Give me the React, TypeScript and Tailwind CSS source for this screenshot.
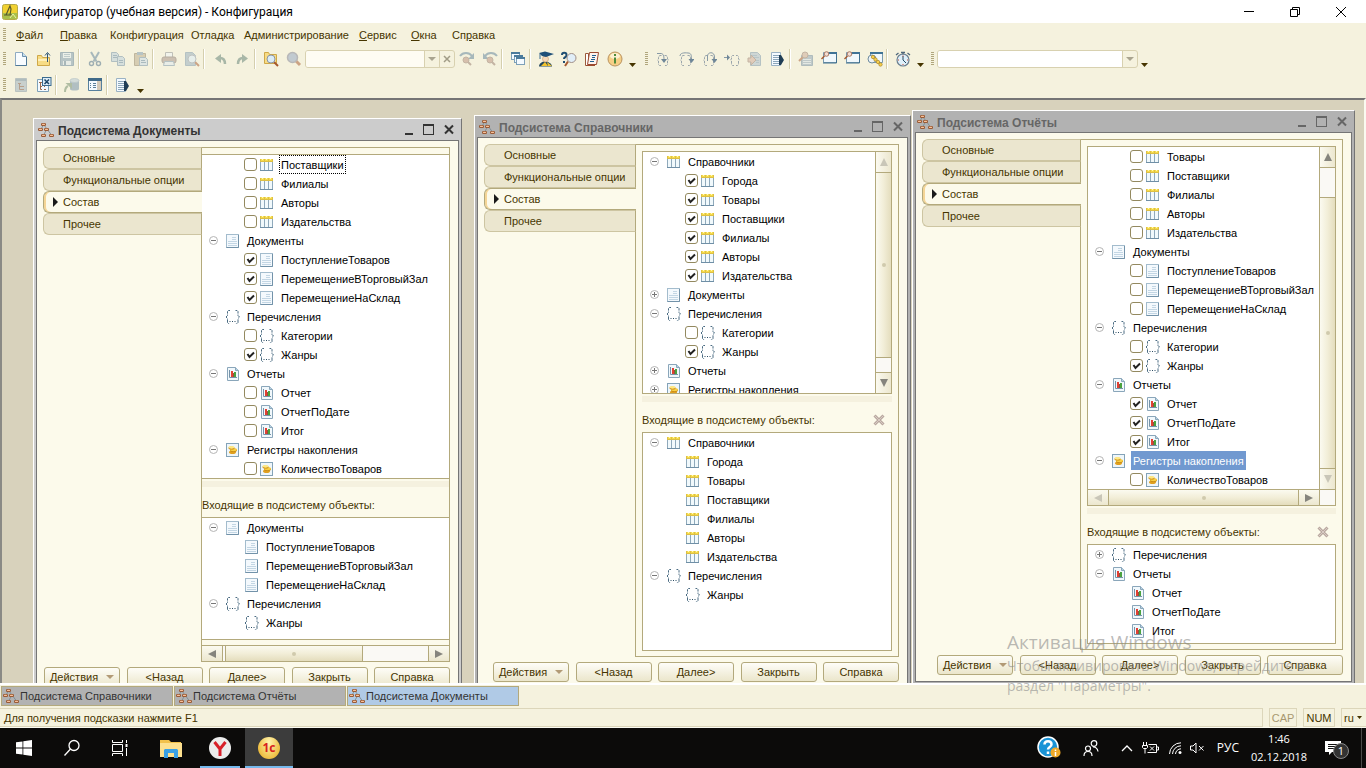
import React, { useState } from 'react';

type Kind = 'catalog' | 'document' | 'enum' | 'report' | 'register';

interface TreeItem {
  kind: Kind;
  label: string;
  state?: 'open' | 'closed'; // only groups have a toggle
  checked?: boolean;
  focused?: boolean;
  selected?: boolean;
}

const group = (kind: Kind, label: string, state: 'open' | 'closed' = 'open', selected = false): TreeItem => ({
  kind,
  label,
  state,
  selected,
});

const leaf = (kind: Kind, label: string, checked = false, focused = false): TreeItem => ({
  kind,
  label,
  checked,
  focused,
});

const documentsTree: TreeItem[] = [
  leaf('catalog', 'Поставщики', false, true),
  leaf('catalog', 'Филиалы'),
  leaf('catalog', 'Авторы'),
  leaf('catalog', 'Издательства'),
  group('document', 'Документы'),
  leaf('document', 'ПоступлениеТоваров', true),
  leaf('document', 'ПеремещениеВТорговыйЗал', true),
  leaf('document', 'ПеремещениеНаСклад', true),
  group('enum', 'Перечисления'),
  leaf('enum', 'Категории'),
  leaf('enum', 'Жанры', true),
  group('report', 'Отчеты'),
  leaf('report', 'Отчет'),
  leaf('report', 'ОтчетПоДате'),
  leaf('report', 'Итог'),
  group('register', 'Регистры накопления'),
  leaf('register', 'КоличествоТоваров'),
];

const documentsIncluded: TreeItem[] = [
  group('document', 'Документы'),
  leaf('document', 'ПоступлениеТоваров'),
  leaf('document', 'ПеремещениеВТорговыйЗал'),
  leaf('document', 'ПеремещениеНаСклад'),
  group('enum', 'Перечисления'),
  leaf('enum', 'Жанры'),
];

const catalogsTree: TreeItem[] = [
  group('catalog', 'Справочники'),
  leaf('catalog', 'Города', true),
  leaf('catalog', 'Товары', true),
  leaf('catalog', 'Поставщики', true),
  leaf('catalog', 'Филиалы', true),
  leaf('catalog', 'Авторы', true),
  leaf('catalog', 'Издательства', true),
  group('document', 'Документы', 'closed'),
  group('enum', 'Перечисления'),
  leaf('enum', 'Категории'),
  leaf('enum', 'Жанры', true),
  group('report', 'Отчеты', 'closed'),
  group('register', 'Регистры накопления', 'closed'),
];

const catalogsIncluded: TreeItem[] = [
  group('catalog', 'Справочники'),
  leaf('catalog', 'Города'),
  leaf('catalog', 'Товары'),
  leaf('catalog', 'Поставщики'),
  leaf('catalog', 'Филиалы'),
  leaf('catalog', 'Авторы'),
  leaf('catalog', 'Издательства'),
  group('enum', 'Перечисления'),
  leaf('enum', 'Жанры'),
];

const reportsTree: TreeItem[] = [
  leaf('catalog', 'Товары'),
  leaf('catalog', 'Поставщики'),
  leaf('catalog', 'Филиалы'),
  leaf('catalog', 'Авторы'),
  leaf('catalog', 'Издательства'),
  group('document', 'Документы'),
  leaf('document', 'ПоступлениеТоваров'),
  leaf('document', 'ПеремещениеВТорговыйЗал'),
  leaf('document', 'ПеремещениеНаСклад'),
  group('enum', 'Перечисления'),
  leaf('enum', 'Категории'),
  leaf('enum', 'Жанры', true),
  group('report', 'Отчеты'),
  leaf('report', 'Отчет', true),
  leaf('report', 'ОтчетПоДате', true),
  leaf('report', 'Итог', true),
  group('register', 'Регистры накопления', 'open', true),
  leaf('register', 'КоличествоТоваров'),
];

const reportsIncluded: TreeItem[] = [
  group('enum', 'Перечисления', 'closed'),
  group('report', 'Отчеты'),
  leaf('report', 'Отчет'),
  leaf('report', 'ОтчетПоДате'),
  leaf('report', 'Итог'),
];

/* ---------- Icons ---------- */

function Svg({ children }: { children: React.ReactNode }) {
  return (
    <svg width="16" height="16" viewBox="0 0 16 16" fill="none" className="shrink-0" aria-hidden="true">
      {children}
    </svg>
  );
}

function KindIcon({ kind }: { kind: Kind }) {
  if (kind === 'catalog') {
    return (
      <Svg>
        <path d="M1 5h13v8H1z" fill="#f1f9fc" />
        <path d="M1.5 4v10M5.500 4v10M9.500 4v10M13.500 4v10" stroke="#8fa9bb" />
        <path d="M1 13.500h13" stroke="#6f8fa6" />
        <path d="M1 2h13v3H1z" fill="#dcbf45" />
        <path d="M2 2h3v2H2zM6 2h3v2H6zM10 2h3v2h-3z" fill="#f6dc4c" />
        <path d="M3 2h1v1H3zM7 2h1v1H7zM11 2h1v1h-1z" fill="#fff7b8" />
      </Svg>
    );
  }
  if (kind === 'document') {
    return (
      <Svg>
        <rect x="1.5" y="1.500" width="12" height="13" fill="#f4f9fd" stroke="#a3bccd" />
        <path d="M13.500 2v12.500H1.500" stroke="#7292a9" />
        <path d="M7 4.500h4M7 6.500h4M3 8.500h9M3 10.500h9M3 12.500h9" stroke="#c3d6e4" />
      </Svg>
    );
  }
  if (kind === 'enum') {
    return (
      <Svg>
        <path d="M5 1.500H3.500L2.500 2.500v4L1 8l1.500 1.500v4l1 1H5M10.500 1.500H12l1 1v4L14.500 8 13 9.500v4l-1 1h-1.500" stroke="#4a6b82" strokeDasharray="5 1" />
        <path d="M4.500 12.500h1M7 12.500h1M9.500 12.500h1" stroke="#2b4c63" />
      </Svg>
    );
  }
  if (kind === 'report') {
    return (
      <Svg>
        <path d="M2.500 1.500h8l3 3v10h-11z" fill="#f1f8fc" stroke="#8aa6ba" />
        <path d="M10.500 1.500v3h3" fill="#b9d2e2" stroke="#8aa6ba" />
        <path d="M4.500 4v7.500H12" stroke="#7693a8" />
        <path d="M6 5h2v6H6z" fill="#e23f33" />
        <path d="M8 7h1v4H8z" fill="#8d5540" />
        <path d="M9 6h2v5H9z" fill="#4aa23f" />
      </Svg>
    );
  }
  return (
    <Svg>
      <rect x="1.500" y="1.500" width="12" height="13" fill="#eef6fb" stroke="#84a3b8" />
      <ellipse cx="7.500" cy="10.200" rx="3.500" ry="1.800" fill="#e0a020" />
      <ellipse cx="8.500" cy="8.300" rx="3.500" ry="1.800" fill="#c98a14" />
      <ellipse cx="8.500" cy="7.600" rx="3.500" ry="1.600" fill="#f8cf45" />
      <ellipse cx="6.500" cy="6" rx="3" ry="1.500" fill="#c98a14" />
      <ellipse cx="6.500" cy="5.300" rx="3" ry="1.400" fill="#ffe883" />
    </Svg>
  );
}

const nodes = [
  [3, 1],
  [0, 6],
  [6, 6],
  [3, 12],
  [11, 12],
];

function SubsystemIcon() {
  return (
    <Svg>
      <path d="M5.500 3L3 7M6 3l7.500 10M8.500 8L5.500 13" stroke="#7b8a92" strokeWidth="0.900" />
      {nodes.map(([x, y]) => (
        <g key={`${x}-${y}`}>
          <rect x={x} y={y} width="5" height="3" rx="1.200" fill="#9a5b36" />
          <rect x={x + 1} y={y + 0.700} width="3" height="1.300" rx="0.600" fill="#f7c29c" />
        </g>
      ))}
    </Svg>
  );
}

function Toggle({ state }: { state: 'open' | 'closed' }) {
  return (
    <svg width="9" height="9" viewBox="0 0 9 9" fill="none" className="shrink-0" aria-hidden="true">
      <circle cx="4.500" cy="4.500" r="4" fill="#fff" stroke="#b4b4b4" />
      <path d={state === 'open' ? 'M2 4.500h5' : 'M2 4.500h5M4.500 2v5'} stroke="#777" />
    </svg>
  );
}

function Glass({ x = 0, y = 0 }: { x?: number; y?: number }) {
  return (
    <g>
      <path d={`M${x + 8} ${y + 8}l4 4`} stroke="#a5592f" strokeWidth="2" />
      <circle cx={x + 5} cy={y + 5} r="4" fill="#d9ecf8" stroke="#8b94a3" />
    </g>
  );
}

const loop = (arrow: string, head: string) => (
  <Svg>
    <path d="M6.500 4.500H5l-1.500 1v2.500L2.500 9l1 1v3.500l1 1h2M9.500 4.500H11l1.500 1v2.500l1 1-1 1v3.500l-1 1h-2" stroke="#9aa5ab" strokeDasharray="3 1" />
    <path d={arrow} stroke="#8799a5" />
    <path d={head} fill="#6f8798" />
  </Svg>
);

const icons: Record<string, React.ReactNode> = {
  newFile: (
    <Svg>
      <path d="M2.500 1.500h7l4 4v9h-11z" fill="#f8fcff" stroke="#8fabc2" />
      <path d="M13.500 6v8.500h-11" stroke="#4f7897" />
      <path d="M9.500 1.500v4h4" fill="#c9dfee" stroke="#6e93af" />
    </Svg>
  ),
  open: (
    <Svg>
      <path d="M1.500 14.500v-10h4l1 2h7v8z" fill="#f7dc85" stroke="#cfa848" />
      <path d="M2 8h11v2H2z" fill="#fff0bb" />
      <path d="M11.500 11V2.500M9 4.500l2.500-3 2.500 3" stroke="#2f5775" />
    </Svg>
  ),
  save: (
    <Svg>
      <path d="M1.500 1.500h13v13h-13z" fill="#7b97ad" stroke="#5e7d95" />
      <path d="M4 2h8v5H4z" fill="#e3edf3" />
      <path d="M5 3.500h6M5 5.500h6" stroke="#8aa5b8" />
      <path d="M4 10h8v4H4z" fill="#dbe6ed" />
      <path d="M5 10h2v4H5z" fill="#5e7d95" />
    </Svg>
  ),
  cut: (
    <Svg>
      <path d="M4 1l5.500 9.500M12 1L6.500 10.500" stroke="#5c7f9a" strokeWidth="2" />
      <circle cx="4.500" cy="12.500" r="2" stroke="#4a6d88" strokeWidth="1.400" />
      <circle cx="11.500" cy="12.500" r="2" stroke="#4a6d88" strokeWidth="1.400" />
    </Svg>
  ),
  copy: (
    <Svg>
      <path d="M1.500 1.500h5l2 2v7h-7z" fill="#b9cddb" stroke="#6f8da5" />
      <path d="M7.500 5.500h5l2 2v7h-7z" fill="#b9cddb" stroke="#6f8da5" />
      <path d="M3 4.500h4M3 6.500h4M9 9.500h4M9 11.500h4" stroke="#6283a0" />
    </Svg>
  ),
  paste: (
    <Svg>
      <path d="M1.500 2.500h11v12h-11z" fill="#b9a98a" stroke="#8b7c60" />
      <path d="M4 1h6v3H4z" fill="#7b97ad" />
      <path d="M6.500 6.500h6l2 2v6h-8z" fill="#c9dae6" stroke="#6f8da5" />
      <path d="M8 9.500h4M8 11.500h5" stroke="#6283a0" />
    </Svg>
  ),
  print: (
    <Svg>
      <path d="M4.500 1.500h7v5h-7z" fill="#eef4f8" stroke="#8a8f94" />
      <rect x="1" y="6" width="14" height="6" rx="2" fill="#a58f86" stroke="#7b6c66" />
      <path d="M3.500 10.500h9l1 4h-11z" fill="#dfe9f0" stroke="#7793aa" />
    </Svg>
  ),
  preview: (
    <Svg>
      <path d="M1.500 1.500h7l3 3v10h-10z" fill="#92abbd" stroke="#7793aa" />
      <Glass x={3} y={3} />
    </Svg>
  ),
  undo: (
    <Svg>
      <path d="M13 13c0-4-2-6-5-6" stroke="#5e7d72" strokeWidth="2.500" />
      <path d="M3 7.500l6-4.500v9z" fill="#5e7d72" />
    </Svg>
  ),
  redo: (
    <Svg>
      <path d="M3 13c0-4 2-6 5-6" stroke="#5e7d72" strokeWidth="2.500" />
      <path d="M13 7.500L7 3v9z" fill="#5e7d72" />
    </Svg>
  ),
  findInFiles: (
    <Svg>
      <path d="M1.500 12.500v-11h4l1 2h7v9z" fill="#f7dc85" stroke="#cfa848" />
      <Glass x={3} y={3} />
    </Svg>
  ),
  find: (
    <Svg>
      <path d="M10 10l4 4" stroke="#a5592f" strokeWidth="3" />
      <circle cx="6.500" cy="6.500" r="5" fill="#8fa3c4" stroke="#7c7f93" strokeWidth="1.500" />
    </Svg>
  ),
  findNext: (
    <Svg>
      <path d="M1 5c3-4 9-4 12 0" stroke="#5c7f9a" strokeWidth="2" />
      <path d="M15 2v6H9z" fill="#5c7f9a" />
      <circle cx="7" cy="9" r="3" fill="#b98e7b" stroke="#93786a" />
      <path d="M9 11l3 3" stroke="#93786a" strokeWidth="2" />
    </Svg>
  ),
  findPrev: (
    <Svg>
      <path d="M15 5c-3-4-9-4-12 0" stroke="#5c7f9a" strokeWidth="2" />
      <path d="M1 2v6h6z" fill="#5c7f9a" />
      <circle cx="8" cy="9" r="3" fill="#b98e7b" stroke="#93786a" />
      <path d="M10 11l3 3" stroke="#93786a" strokeWidth="2" />
    </Svg>
  ),
  windows: (
    <Svg>
      {[0, 3, 5].map((d) => (
        <g key={d}>
          <rect x={1.5 + d} y={1.5 + d} width="8" height="7" fill="#f4faff" stroke="#7da0b8" />
          <rect x={1 + d} y={1 + d} width="9" height="2" fill="#4b7b9c" />
        </g>
      ))}
    </Svg>
  ),
  assistant: (
    <Svg>
      <path d="M1 15.500c0-3 3-5 6-5s7 2 7 5z" fill="#24495f" />
      <path d="M3 15l4-4 3 4z" fill="#f3c32d" />
      <path d="M9 11l5 4h-4z" fill="#f3c32d" />
      <circle cx="7.500" cy="8" r="3" fill="#f6d9b8" stroke="#c79c70" strokeWidth="0.600" />
      <path d="M1 2l6-1.500 9 2.500-8 3-4-1z" fill="#1f5078" />
      <path d="M2 3v5" stroke="#3c6c90" />
    </Svg>
  ),
  syntaxHelp: (
    <Svg>
      <path d="M1 4c0-3 4.500-3 4.500 0S3 5.500 3 8M3 10v2" stroke="#1f4e73" strokeWidth="2" />
      <path d="M7 10.500L4 15" stroke="#a5592f" strokeWidth="2" />
      <circle cx="10.500" cy="7" r="4.500" fill="#e1eef8" stroke="#a08e86" />
    </Svg>
  ),
  book: (
    <Svg>
      <path d="M1.500 2.500h3v12h-3z" fill="#fff" stroke="#9c5a3c" />
      <path d="M5.500 1.500h9l-2 12h-9z" fill="#fdf3ee" stroke="#9c4a30" />
      <path d="M8 4.500h4M8 6.500h3M7 8.500h4M6 10.500h4" stroke="#1f5f8f" />
      <path d="M2 14.500h9" stroke="#9c4a30" />
    </Svg>
  ),
  info: (
    <Svg>
      <circle cx="8" cy="8" r="7" fill="#f6cf86" stroke="#b99361" />
      <ellipse cx="8" cy="5" rx="5" ry="3" fill="#fdf0d0" />
      <path d="M8 3v2M8 6.500v6" stroke="#4d8b3c" strokeWidth="2" />
    </Svg>
  ),
  stepInto: loop('M2 2.500h4c2 0 3 2 3 6', 'M6 8h6l-3 4z'),
  stepOver: loop('M2 5c0-3 4-3.500 8-3 3 0 3.500 2 3.500 6', 'M10.500 8h6l-3 4z'),
  stepOut: loop('M6.500 10V5c0-4 7-5 7 1v3', 'M10.500 8h6l-3 4z'),
  runTo: (
    <Svg>
      <path d="M10 4.500H8.500l-1 1V8l-1 1 1 1v3.500l1 1H10M12 4.500h1.500l1 1V8l1 1-1 1v3.500l-1 1H12" stroke="#9aa5ab" strokeDasharray="3 1" />
      <path d="M0 6.500h3" stroke="#8799a5" />
      <path d="M3 3.500v6l3-3z" fill="#6f8798" />
    </Svg>
  ),
  gotoLine: (
    <Svg>
      <path d="M3.500 1.500h7l3 3v10h-10z" fill="#a9bccb" stroke="#7793aa" />
      <path d="M5 4.500h5M5 6.500h7M9 9.500h3M9 11.500h3" stroke="#7e9cb3" />
      <path d="M1 7h3V4l5 5-5 5v-3H1z" fill="#cfa797" stroke="#93786a" />
    </Svg>
  ),
  runPage: (
    <Svg>
      <path d="M1.500 1.500h9v13h-9z" fill="#f4faff" stroke="#9ab2c4" />
      <path d="M3 4.500h6M3 6.500h6M3 8.500h6M3 10.500h6M3 12.500h6" stroke="#8ca7bb" />
      <path d="M9 4h2l3 5-3 5H9z" fill="#1f3d55" />
    </Svg>
  ),
  breakpoints: (
    <Svg>
      <path d="M3.500 4.500h11v10h-11z" fill="#8aa2b5" stroke="#6c879d" />
      <path d="M5 8.500h8M5 10.500h8M5 12.500h8" stroke="#d3dfe8" />
      <path d="M5 6l-4 4" stroke="#a5592f" strokeWidth="2" />
      <circle cx="7" cy="4" r="3" fill="#cba794" stroke="#93786a" />
    </Svg>
  ),
  watch: (
    <Svg>
      <path d="M2.500 1.500h13v10h-13z" fill="#f1f8fc" stroke="#7899af" />
      <path d="M15.500 2v10H2" stroke="#41708f" />
      <path d="M7 1h9v2H7z" fill="#3f7396" />
      <path d="M3.500 5L.5 8" stroke="#a5592f" strokeWidth="1.500" />
      <circle cx="5.500" cy="3" r="2.300" fill="#f3ddd2" stroke="#ab7b66" />
    </Svg>
  ),
  callStack: (
    <Svg>
      <path d="M3.500 1.500h12v10h-12z" fill="#f1f8fc" stroke="#7899af" />
      <path d="M3 1h13v2H3z" fill="#3f7396" />
      <circle cx="5" cy="8" r="4" fill="#eef3f5" stroke="#6f8c9f" />
      <g fill="#f7d04a" stroke="#a9852a" strokeWidth="0.700">
        <circle cx="6" cy="6" r="1.700" />
        <circle cx="8.500" cy="8.500" r="1.700" />
        <circle cx="11" cy="11" r="1.700" />
        <circle cx="13.500" cy="13.500" r="1.700" />
      </g>
    </Svg>
  ),
  timer: (
    <Svg>
      <circle cx="8" cy="9" r="6" fill="#dff0fa" stroke="#6b7f90" strokeWidth="1.200" />
      <path d="M8 5v4l3 3" stroke="#23475f" />
      <path d="M6 1.500h4M8 1.500v2M1 4l2.500-2M15 4l-2.500-2" stroke="#4c6579" strokeWidth="1.300" />
      <path d="M8 5.500v-1M12 9h1M3 9h1M8 13v1" stroke="#d0462e" />
    </Svg>
  ),
  configTree: (
    <Svg>
      <path d="M2.500 1.500h11v13h-11z" fill="#9db0be" stroke="#8195a5" />
      <path d="M3 2h10v2H3z" fill="#6c879d" />
      <path d="M5 6.500h3M6.500 7v5.500H11M6.500 9.500H11" stroke="#7a4f3a" />
    </Svg>
  ),
  closeConfig: (
    <Svg>
      <path d="M1.500 2.500h11v12h-11z" fill="#f4faff" stroke="#7da0b8" />
      <path d="M3 5.500h3M4.500 6v6.500H6M8 12.500h2M4.500 9.500H6M8 9.500h1" stroke="#9c6a4c" />
      <rect x="6.500" y="0.500" width="8.500" height="8" fill="#dcecf7" stroke="#3b6b8f" />
      <path d="M8.500 2.500l4.500 4.500M13 2.500L8.500 7" stroke="#1c4566" strokeWidth="1.500" />
    </Svg>
  ),
  updateDb: (
    <Svg>
      <path d="M6 3v9c0 2 9 2 9 0V3z" fill="#6f8ea8" />
      <ellipse cx="10.500" cy="3.500" rx="4.500" ry="2" fill="#b5c8d6" stroke="#7f9bb1" strokeWidth="0.700" />
      <path d="M1 15c0-3 1-5 3-6" stroke="#6d8a68" strokeWidth="2" />
      <path d="M1.500 6H8v6z" fill="#6d8a68" />
    </Svg>
  ),
  formPanel: (
    <Svg>
      <path d="M1.500 1.500h13v12h-13z" fill="#f4faff" stroke="#56809d" />
      <path d="M1 1h14v3H1z" fill="#3f6a89" />
      <path d="M10 4h4v9h-4z" fill="#d4c9b8" />
      <path d="M3 6.500h1M6 6.500h3M3 8.500h1M6 8.500h3M3 10.500h1M6 10.500h3" stroke="#5c7f99" />
    </Svg>
  ),
};

/* ---------- Toolbar parts ---------- */

function ToolButton({ icon, label, off = false }: { icon: string; label: string; off?: boolean }) {
  return (
    <button type="button" aria-label={label} disabled={off} className="flex h-5 w-[23px] shrink-0 items-center justify-center disabled:opacity-50">
      {icons[icon]}
    </button>
  );
}

function Separator() {
  return (
    <span className="flex w-[5px] shrink-0">
      <span className="h-5 w-px bg-[#d5cfae]" />
      <span className="h-5 w-px bg-white" />
    </span>
  );
}

function Grip() {
  return (
    <svg width="3" height="14" viewBox="0 0 3 14" className="mx-[3px] shrink-0" aria-hidden="true">
      <path d="M0 .5h3M0 2.500h3M0 4.500h3M0 6.500h3M0 8.500h3M0 10.500h3M0 12.500h3" stroke="#b0a67c" />
    </svg>
  );
}

function More() {
  return (
    <button type="button" aria-label="Еще" className="flex h-5 w-3 shrink-0 items-end justify-center pb-[2px]">
      <svg width="7" height="4" viewBox="0 0 7 4" aria-hidden="true">
        <path d="M0 0h7L3.500 4z" fill="#463500" />
      </svg>
    </button>
  );
}

function Combo({ label, className, clearable = false }: { label: string; className: string; clearable?: boolean }) {
  return (
    <div className={`flex h-[18px] shrink-0 overflow-hidden rounded-[3px] border border-[#d8d1b0] ${className}`}>
      <input type="text" aria-label={label} className={`min-w-0 flex-1 px-1 outline-none ${clearable ? 'bg-[#fefcf3]' : 'bg-white'}`} />
      <button type="button" aria-label="Список" className="flex w-[15px] items-center justify-center border-l border-[#d8d1b0]">
        <svg width="8" height="4" viewBox="0 0 8 4" aria-hidden="true">
          <path d="M0 0h8L4 4z" fill="#a9a48f" />
        </svg>
      </button>
      {clearable && (
        <button type="button" aria-label="Очистить" className="flex w-[15px] items-center justify-center border-l border-[#d8d1b0]">
          <svg width="8" height="8" viewBox="0 0 8 8" aria-hidden="true">
            <path d="M1 1l6 6M7 1L1 7" stroke="#a19c86" strokeWidth="1.500" />
          </svg>
        </button>
      )}
    </div>
  );
}

/* ---------- Tree ---------- */

function TreeRow({ item, checkable }: { item: TreeItem; checkable: boolean }) {
  const text = item.selected
    ? 'bg-[#7199d0] text-white'
    : item.focused
      ? 'outline-1 -outline-offset-1 outline-dotted outline-black'
      : '';
  const caption = (
    <span className={`h-[19px] px-[2px] pt-[2px] leading-[17px] whitespace-nowrap ${text}`}>{item.label}</span>
  );

  if (item.state) {
    return (
      <li className="flex h-[19px] items-center pl-[7px]">
        <Toggle state={item.state} />
        <span className="mr-1 ml-[7px]">
          <KindIcon kind={item.kind} />
        </span>
        {caption}
      </li>
    );
  }
  if (!checkable) {
    return (
      <li className="flex h-[19px] items-center gap-1 pl-[42px]">
        <KindIcon kind={item.kind} />
        {caption}
      </li>
    );
  }
  return (
    <li>
      <label className="flex h-[19px] items-center pl-[42px]">
        <span className="relative mr-[2px] flex shrink-0">
          <input
            type="checkbox"
            defaultChecked={item.checked}
            className="peer h-[13px] w-[13px] appearance-none rounded-[3px] border border-[#93895f] bg-white"
          />
          <svg width="13" height="13" viewBox="0 0 13 13" fill="none" className="pointer-events-none absolute inset-0 hidden peer-checked:block" aria-hidden="true">
            <path d="M3.500 6l2 3L10 4.500" stroke="#222" strokeWidth="2" />
          </svg>
        </span>
        <KindIcon kind={item.kind} />
        <span className="ml-1 flex">{caption}</span>
      </label>
    </li>
  );
}

function Tree({ items, checkable = false }: { items: TreeItem[]; checkable?: boolean }) {
  return (
    <ul className="min-w-0 flex-1 overflow-hidden bg-white text-black">
      {items.map((item, i) => (
        <TreeRow key={i} item={item} checkable={checkable} />
      ))}
    </ul>
  );
}

/* ---------- Scroll bars ---------- */

const arrows = {
  up: 'M0 8L4 0l4 8z',
  down: 'M0 0h8L4 8z',
  left: 'M8 0v8L0 4z',
  right: 'M0 0l8 4-8 4z',
};

function ScrollArrow({ dir, dim = false }: { dir: keyof typeof arrows; dim?: boolean }) {
  const vertical = dir === 'up' || dir === 'down';
  return (
    <button
      type="button"
      aria-label="Прокрутка"
      className={`flex shrink-0 items-center justify-center from-[#fbfaf0] to-[#ece7cf] ${vertical ? 'h-5 w-full bg-linear-to-r' : 'h-full w-5 bg-linear-to-b'}`}
    >
      <svg width="8" height="8" viewBox="0 0 8 8" aria-hidden="true">
        <path d={arrows[dir]} fill={dim ? '#c9c6b8' : '#85847d'} />
      </svg>
    </button>
  );
}

function Thumb({ vertical = false, className = '' }: { vertical?: boolean; className?: string }) {
  return (
    <div
      className={`flex items-center justify-center border-[#b3a97c] from-[#fbfaf0] via-[#f2eed8] to-[#e4ddbd] ${vertical ? 'border-y bg-linear-to-r' : 'border-x bg-linear-to-b'} ${className}`}
    >
      <span className="h-1 w-1 rounded-full bg-[#d0caad]" />
    </div>
  );
}

/* ---------- Windows ---------- */

const pages = ['Основные', 'Функциональные опции', 'Состав', 'Прочее'];

function PageTabs({ className }: { className: string }) {
  const [current, setCurrent] = useState('Состав');
  return (
    <div role="tablist" className={`relative z-10 -mr-px flex shrink-0 flex-col ${className}`}>
      {pages.map((name) => (
        <button
          key={name}
          type="button"
          role="tab"
          aria-selected={name === current}
          onClick={() => setCurrent(name)}
          className={
            name === current
              ? 'flex h-[22px] items-center rounded-l-[6px] border-y border-l border-[#b3a97c] bg-[#fcfaeb] pl-[9px] text-left text-[#463500] shadow-[inset_2px_0_0_#f5d596]'
              : 'flex h-[22px] items-center rounded-l-[6px] border border-[#cdc5a2] border-r-[#b3a97c] bg-[#ebe6cf] pl-[19px] text-left text-[#463500]'
          }
        >
          {name === current && (
            <svg width="5" height="10" viewBox="0 0 5 10" className="mr-[5px]" aria-hidden="true">
              <path d="M0 0l5 5-5 5z" fill="#1a1a1a" />
            </svg>
          )}
          {name}
        </button>
      ))}
    </div>
  );
}

function IncludedLabel({ removable = false, className }: { removable?: boolean; className: string }) {
  return (
    <div className={`flex items-center justify-between pb-[2px] text-[#463500] ${className}`}>
      <span>Входящие в подсистему объекты:</span>
      {removable && (
        <button type="button" aria-label="Удалить" disabled className="mr-[7px]">
          <svg width="12" height="12" viewBox="0 0 12 12" aria-hidden="true">
            <path d="M1.500 1.500l9 9M10.500 1.500l-9 9" stroke="#b9a8a0" strokeWidth="3" />
            <path d="M2 2l8 8M10 2l-8 8" stroke="#d8cbc4" />
          </svg>
        </button>
      )}
    </div>
  );
}

const actionClass =
  'flex h-5 w-[76px] items-center justify-center rounded-[3px] border border-[#b3a97c] bg-linear-to-b from-[#fefdf8] to-[#ebe6cb] text-[#463500]';

function Actions() {
  return (
    <div className="ml-auto flex w-[406px] justify-between">
      <button type="button" className={actionClass}>
        Действия
        <svg width="8" height="4" viewBox="0 0 8 4" className="ml-2" aria-hidden="true">
          <path d="M0 0h8L4 4z" fill="#b29a76" />
        </svg>
      </button>
      {['<Назад', 'Далее>', 'Закрыть', 'Справка'].map((name) => (
        <button key={name} type="button" className={actionClass}>
          {name}
        </button>
      ))}
    </div>
  );
}

interface SubsystemWindowProps {
  title: string;
  className: string; // place and width on the desktop
  tabsClass: string;
  active?: boolean;
  children: React.ReactNode;
}

function SubsystemWindow({ title, className, tabsClass, active = false, children }: SubsystemWindowProps) {
  const tone = active ? 'bg-[#cccccc] text-[#333333]' : 'bg-[#b2b2b2] text-[#666666]';
  return (
    <section className={`absolute border border-t-white border-r-[#757575] border-b-[#757575] border-l-white px-[2px] pb-[2px] ${tone} ${className}`}>
      <header className="flex h-[21px] items-center pr-1 pl-[2px]">
        <SubsystemIcon />
        <h2 className="ml-1 flex-1 pt-[2px] text-[12px] font-bold">{title}</h2>
        <svg width="50" height="11" viewBox="0 0 50 11" fill="none" stroke="currentColor" aria-hidden="true">
          <path d="M0 10h8" strokeWidth="2" />
          <rect x="18.500" y="0.500" width="10" height="10" />
          <path d="M18 1h11" strokeWidth="2" />
          <path d="M40 1.500l8 8M48 1.500l-8 8" strokeWidth="2" />
        </svg>
      </header>
      <div className="border border-[#757575] bg-[#fcfaeb] pt-[6px] pr-2 pb-[6px] pl-[6px]">
        <div className="flex items-start">
          <PageTabs className={tabsClass} />
          {children}
        </div>
        <div className="pt-[5px]">
          <Actions />
        </div>
      </div>
    </section>
  );
}

function DocumentsWindow() {
  return (
    <SubsystemWindow title="Подсистема Документы" active className="top-[18px] left-[31px] w-[429px]" tabsClass="w-[159px]">
      <div className="min-w-0 flex-1 border border-[#b3a97c]">
        <div className="mt-[6px] flex h-[325px] border-y border-[#b3a97c]">
          <Tree items={documentsTree} checkable />
        </div>
        <div className="mt-[2px] h-[6px] bg-[#f5f1df]" />
        <IncludedLabel className="mt-2 h-[22px]" />
        <div className="flex h-[123px] border-y border-[#b3a97c]">
          <Tree items={documentsIncluded} />
        </div>
        <div className="mt-[5px] flex h-[16px] border-t border-[#b3a97c] bg-[#faf9f5]">
          <ScrollArrow dir="left" />
          <div className="w-[3px] border-l border-[#b3a97c]" />
          <Thumb className="w-[138px]" />
          <div className="flex-1 border-r border-[#b3a97c]" />
          <ScrollArrow dir="right" />
        </div>
      </div>
    </SubsystemWindow>
  );
}

function CatalogsWindow() {
  return (
    <SubsystemWindow title="Подсистема Справочники" className="top-[15px] left-[472px] w-[437px]" tabsClass="w-[152px]">
      <div className="min-w-0 flex-1 border border-[#b3a97c] px-[6px] pt-[6px] pb-[5px]">
        <div className="flex h-[243px] border border-[#b3a97c]">
          <Tree items={catalogsTree} checkable />
          <div className="flex w-4 flex-col border-l border-[#b3a97c] bg-[#faf9f5]">
            <ScrollArrow dir="up" dim />
            <Thumb vertical className="flex-1" />
            <div className="h-[15px] border-b border-[#b3a97c]" />
            <ScrollArrow dir="down" />
          </div>
        </div>
        <div className="mt-[2px] h-[6px] bg-[#f5f1df]" />
        <IncludedLabel removable className="mt-[7px] h-[23px]" />
        <div className="flex h-[219px] border border-[#b3a97c]">
          <Tree items={catalogsIncluded} />
        </div>
      </div>
    </SubsystemWindow>
  );
}

function ReportsWindow() {
  return (
    <SubsystemWindow title="Подсистема Отчёты" className="top-[10px] left-[910px] w-[443px]" tabsClass="w-[159px]">
      <div className="min-w-0 flex-1 border border-[#b3a97c] px-[6px] pt-[6px] pb-[5px]">
        <div className="border border-[#b3a97c]">
          <div className="flex h-[342px]">
            <Tree items={reportsTree} checkable />
            <div className="flex w-4 flex-col border-l border-[#b3a97c] bg-[#faf9f5]">
              <ScrollArrow dir="up" />
              <div className="h-[30px] border-t border-[#b3a97c]" />
              <Thumb vertical className="flex-1" />
              <ScrollArrow dir="down" dim />
            </div>
          </div>
          <div className="flex h-[16px] border-t border-[#b3a97c] bg-[#faf9f5]">
            <ScrollArrow dir="left" dim />
            <Thumb className="flex-1" />
            <ScrollArrow dir="right" />
            <div className="w-4 border-l border-[#b3a97c]" />
          </div>
        </div>
        <div className="mt-[2px] h-[6px] bg-[#f5f1df]" />
        <IncludedLabel removable className="mt-[7px] h-[23px]" />
        <div className="flex h-[100px] border border-[#b3a97c]">
          <Tree items={reportsIncluded} />
        </div>
      </div>
    </SubsystemWindow>
  );
}

/* ---------- Frame of the application ---------- */

function TitleBar() {
  return (
    <header className="flex h-[23px] shrink-0 items-center bg-white pr-5 pl-[2px] font-[Roboto,'Noto_Sans',sans-serif] text-[12px] text-black">
      <Svg>
        <rect x="0.500" y="0.500" width="15" height="15" rx="2" fill="#f1d132" stroke="#b5a94a" />
        <path d="M1 9h14v6H1z" fill="#a9bf4a" />
        <path d="M4 11L8 2l1 3-1 6M2 11h8" stroke="#5a5a2a" strokeWidth="1.200" />
        <path d="M8 14l3-4 3 4" stroke="#e9f2a8" />
      </Svg>
      <h1 className="ml-[5px] flex-1">Конфигуратор (учебная версия) - Конфигурация</h1>
      <div className="flex items-center gap-9">
        <button type="button" aria-label="Свернуть">
          <svg width="10" height="11" viewBox="0 0 10 11" stroke="#000" aria-hidden="true">
            <path d="M0 5.500h10" />
          </svg>
        </button>
        <button type="button" aria-label="Восстановить">
          <svg width="10" height="10" viewBox="0 0 10 10" fill="none" stroke="#000" aria-hidden="true">
            <path d="M.5 2.500h7v7h-7zM2.500 2.500v-2h7v7h-2" />
          </svg>
        </button>
        <button type="button" aria-label="Закрыть">
          <svg width="10" height="10" viewBox="0 0 10 10" stroke="#000" aria-hidden="true">
            <path d="M0 0l10 10M10 0L0 10" />
          </svg>
        </button>
      </div>
    </header>
  );
}

function MenuBar() {
  return (
    <nav className="flex h-6 shrink-0 items-center">
      <Grip />
      <button type="button" className="ml-[7px] w-11 text-left"><u>Ф</u>айл</button>
      <button type="button" className="w-[50px] text-left"><u>П</u>равка</button>
      <button type="button" className="w-[81px] text-left">Конфигурация</button>
      <button type="button" className="w-[53px] text-left">Отладка</button>
      <button type="button" className="w-[115px] text-left">Администрирование</button>
      <button type="button" className="w-[52px] text-left"><u>С</u>ервис</button>
      <button type="button" className="w-[41px] text-left"><u>О</u>кна</button>
      <button type="button" className="text-left">Сп<u>р</u>авка</button>
    </nav>
  );
}

function Toolbars() {
  return (
    <>
      <div className="flex h-6 shrink-0 items-center">
        <Grip />
        <ToolButton icon="newFile" label="Создать" />
        <ToolButton icon="open" label="Открыть" />
        <ToolButton icon="save" label="Сохранить" off />
        <Separator />
        <ToolButton icon="cut" label="Вырезать" off />
        <ToolButton icon="copy" label="Копировать" off />
        <ToolButton icon="paste" label="Вставить" off />
        <Separator />
        <ToolButton icon="print" label="Печать" off />
        <ToolButton icon="preview" label="Просмотр" off />
        <Separator />
        <ToolButton icon="undo" label="Отменить" off />
        <ToolButton icon="redo" label="Вернуть" off />
        <Separator />
        <ToolButton icon="findInFiles" label="Глобальный поиск" />
        <ToolButton icon="find" label="Найти" off />
        <Combo label="Строка поиска" className="w-[150px]" clearable />
        <ToolButton icon="findNext" label="Найти следующий" off />
        <ToolButton icon="findPrev" label="Найти предыдущий" off />
        <Separator />
        <ToolButton icon="windows" label="Окна" />
        <Separator />
        <ToolButton icon="assistant" label="Синтакс-помощник" />
        <ToolButton icon="syntaxHelp" label="Поиск в помощнике" />
        <ToolButton icon="book" label="Справка" />
        <ToolButton icon="info" label="О программе" />
        <More />
        <span className="ml-1 flex"><Grip /></span>
        <ToolButton icon="stepInto" label="Шагнуть в" />
        <ToolButton icon="stepOver" label="Шагнуть через" />
        <ToolButton icon="stepOut" label="Шагнуть из" />
        <ToolButton icon="runTo" label="Идти до курсора" />
        <ToolButton icon="gotoLine" label="Текущая строка" off />
        <ToolButton icon="runPage" label="Модуль" />
        <Separator />
        <ToolButton icon="breakpoints" label="Точки останова" off />
        <ToolButton icon="watch" label="Табло" />
        <ToolButton icon="watch" label="Локальные переменные" />
        <ToolButton icon="callStack" label="Стек вызовов" />
        <Separator />
        <ToolButton icon="timer" label="Замер производительности" />
        <More />
        <span className="ml-[2px] flex"><Grip /></span>
        <Combo label="Процедуры" className="w-[201px]" />
        <More />
      </div>
      <div className="flex h-[27px] shrink-0 items-center">
        <Grip />
        <ToolButton icon="configTree" label="Открыть конфигурацию" off />
        <ToolButton icon="closeConfig" label="Закрыть конфигурацию" />
        <Separator />
        <ToolButton icon="updateDb" label="Обновить базу данных" off />
        <ToolButton icon="formPanel" label="Окно конфигурации" />
        <Separator />
        <ToolButton icon="runPage" label="Начать отладку" />
        <More />
      </div>
    </>
  );
}

function WindowTabs() {
  const windows = ['Подсистема Справочники', 'Подсистема Отчёты', 'Подсистема Документы'];
  return (
    <div className="flex h-[25px] shrink-0 gap-px border-t-2 border-white pt-px pb-[2px] pl-px">
      {windows.map((name) => (
        <button
          key={name}
          type="button"
          className={`flex w-[172px] items-center gap-px border border-[#b3a97c] pl-px text-[#333333] ${name === 'Подсистема Документы' ? 'bg-[#b0cae6]' : 'bg-[#b2b2b2]'}`}
        >
          <SubsystemIcon />
          <span>{name}</span>
        </button>
      ))}
    </div>
  );
}

function StatusBar() {
  return (
    <footer className="flex h-5 shrink-0 gap-[6px] border-b border-[#fbfaf0]">
      <p className="flex flex-1 items-center border border-l-0 border-[#dcd6ba] pl-1">Для получения подсказки нажмите F1</p>
      <span className="flex w-7 items-center justify-center border border-[#dcd6ba] text-[#a89870]">CAP</span>
      <span className="flex w-8 items-center justify-center border border-[#dcd6ba]">NUM</span>
      <button type="button" className="flex w-[25px] items-center gap-[3px] border border-r-0 border-[#dcd6ba] pl-[2px]">
        ru
        <svg width="5" height="3" viewBox="0 0 5 3" aria-hidden="true">
          <path d="M0 0h5L2.500 3z" fill="#463500" />
        </svg>
      </button>
    </footer>
  );
}

function Taskbar() {
  return (
    <footer className="flex h-10 shrink-0 items-stretch justify-between bg-[#0c0b0a] font-['Open_Sans','Noto_Sans',sans-serif] text-[12px] text-white">
      <div className="flex">
        <button type="button" aria-label="Пуск" className="flex w-12 items-center justify-center">
          <svg width="16" height="16" viewBox="0 0 16 16" fill="#fff" aria-hidden="true">
            <path d="M0 2.300L6.500 1.400v6.200H0zM7.300 1.300L16 0v7.600H7.300zM0 8.400h6.500v6.200L0 13.700zM7.300 8.400H16V16l-8.700-1.300z" />
          </svg>
        </button>
        <button type="button" aria-label="Поиск" className="flex w-12 items-center justify-center">
          <svg width="18" height="18" viewBox="0 0 18 18" fill="none" stroke="#fff" strokeWidth="1.300" aria-hidden="true">
            <circle cx="11" cy="6.500" r="5" />
            <path d="M7.500 10L1.500 16.500" />
          </svg>
        </button>
        <button type="button" aria-label="Представление задач" className="flex w-12 items-center justify-center">
          <svg width="18" height="16" viewBox="0 0 18 16" fill="none" stroke="#fff" aria-hidden="true">
            <path d="M1.500 0v2.500h10V0M1.500 16v-2.500h10V16M1.500 4.500h10v7h-10zM15.500 0v3M15.500 8v8" />
            <rect x="14.500" y="4" width="2" height="3" fill="#fff" stroke="none" />
          </svg>
        </button>
        <button type="button" aria-label="Проводник" className="ml-[3px] flex w-12 items-center justify-center">
          <svg width="22" height="19" viewBox="0 0 22 19" aria-hidden="true">
            <path d="M0 1h9l2 2h10v15H0z" fill="#f2c14c" />
            <path d="M0 4h22v14H0z" fill="#fde08f" />
            <path d="M4 19v-8l1-1h12l1 1v8h-4v-5H8v5z" fill="#3ba0e4" />
          </svg>
        </button>
        <button type="button" aria-label="Яндекс.Браузер" className="ml-px flex w-12 items-center justify-center">
          <span className="flex h-full w-10 items-center justify-center border-y-2 border-t-transparent border-b-[#76b9ed]">
            <svg width="22" height="22" viewBox="0 0 22 22" aria-hidden="true">
              <circle cx="11" cy="11" r="11" fill="#ececec" />
              <path d="M5.500 5l5.500 7 5.500-7M11 11v8" fill="none" stroke="#d8202a" strokeWidth="3" />
            </svg>
          </span>
        </button>
        <button type="button" aria-label="1С:Предприятие" className="ml-px flex w-12 items-center justify-center border-y-2 border-t-[#3c3c3c] border-b-[#76b9ed] bg-[#3c3c3c]">
          <span className="flex h-[22px] w-[22px] items-center justify-center rounded-full bg-radial-[at_50%_25%] from-[#fff5b0] to-[#e6a817]">
            <span className="text-[12px] leading-[22px] font-bold text-[#d8201c]">1с</span>
          </span>
        </button>
      </div>
      <div className="flex items-center">
        <svg width="24" height="24" viewBox="0 0 24 24" fill="none" aria-hidden="true">
          <circle cx="11" cy="11" r="10" fill="#1a93d6" stroke="#fff" strokeWidth="1.500" />
          <path d="M7.500 8.500c0-4.500 7-4.500 7 0 0 2.500-3.500 2.500-3.500 5M11 15.500v2.500" stroke="#fff" strokeWidth="2.500" />
          <circle cx="18.500" cy="16.500" r="5" fill="#efa827" />
          <path d="M18.500 13.500v1.500M18.500 16v4" stroke="#fff" strokeWidth="1.500" />
        </svg>
        <svg width="16" height="16" viewBox="0 0 16 16" fill="none" stroke="#fff" strokeWidth="1.200" className="ml-[22px]" aria-hidden="true">
          <circle cx="5" cy="8.500" r="2.500" />
          <path d="M1 16c0-3 1.500-4.500 4-4.500s4 1.500 4 4.500" />
          <circle cx="11" cy="3.500" r="2.800" />
          <path d="M10 7c3 0 4.500 1.500 5 4.500" />
        </svg>
        <svg width="12" height="8" viewBox="0 0 12 8" fill="none" stroke="#fff" strokeWidth="1.300" className="ml-[22px]" aria-hidden="true">
          <path d="M1 7l5-5 5 5" />
        </svg>
        <svg width="17" height="12" viewBox="0 0 17 12" fill="none" stroke="#fff" className="ml-[9px]" aria-hidden="true">
          <path d="M1.500 0v3M4.500 0v3M.5 3.500h5v2l-1 1h-3l-1-1zM3 7v4.500" />
          <path d="M6.500 2.500h8v8h-9M15 5h1.500v3H15M8 4.500l4 4M12 4.500l-4 4" />
        </svg>
        <svg width="13" height="12" viewBox="0 0 13 12" fill="none" stroke="#fff" className="ml-[10px]" aria-hidden="true">
          <path d="M.5 12A11.500 11.500 0 0112 .8M3.500 12A8.500 8.500 0 0112 3.800M6.500 12A5.500 5.500 0 0112 6.800" />
          <circle cx="11" cy="10.500" r="1.500" fill="#fff" stroke="none" />
        </svg>
        <svg width="15" height="12" viewBox="0 0 15 12" fill="none" stroke="#fff" className="ml-2" aria-hidden="true">
          <path d="M.5 4h2.500l3-3v10l-3-3H.500zM9 4l4.500 4.500M13.500 4L9 8.500" />
        </svg>
        <span className="ml-3">РУС</span>
        <div className="ml-3 flex w-[56px] flex-col items-center text-[11px] leading-[18px]">
          <span>1:46</span>
          <span>02.12.2018</span>
        </div>
        <button type="button" aria-label="Уведомления" className="relative ml-[18px] h-6 w-6">
          <svg width="17" height="16" viewBox="0 0 17 16" aria-hidden="true">
            <path d="M0 1h16v11H7l-3 3v-3H0z" fill="#fff" />
            <path d="M3 4.500h10M3 6.500h10M3 8.500h7" stroke="#111" />
          </svg>
          <span className="absolute top-[7px] left-[8px] flex h-4 w-4 items-center justify-center rounded-full border border-[#8a8a8a] bg-[#333333] text-[11px]">
            1
          </span>
        </button>
        <span className="ml-3 h-10 w-[5px] border-l border-[#4a4a48]" />
      </div>
    </footer>
  );
}

function ActivationNotice() {
  return (
    <aside className="pointer-events-none absolute right-[30px] bottom-[72px] z-20 w-[329px] font-['Open_Sans','Noto_Sans',sans-serif] text-[#8c8c8c]/60">
      <p className="text-[19px] leading-7">Активация Windows</p>
      <p className="text-[14px] leading-5">
        Чтобы активировать Windows, перейдите в
        <br />
        раздел "Параметры".
      </p>
    </aside>
  );
}

export default function App() {
  return (
    <div className="relative flex h-screen w-full flex-col overflow-hidden bg-[#f5f2de] font-['Liberation_Sans',Arial,sans-serif] text-[11px] leading-[14px] text-[#463500]">
      <TitleBar />
      <MenuBar />
      <Toolbars />
      <main className="relative min-h-0 flex-1 overflow-hidden border-t-2 border-r-2 border-l-2 border-t-[#757575] border-r-[#fbfaf0] border-l-[#8a8a85] bg-[#d8d2bc]">
        <DocumentsWindow />
        <CatalogsWindow />
        <ReportsWindow />
      </main>
      <WindowTabs />
      <StatusBar />
      <Taskbar />
      <ActivationNotice />
    </div>
  );
}
